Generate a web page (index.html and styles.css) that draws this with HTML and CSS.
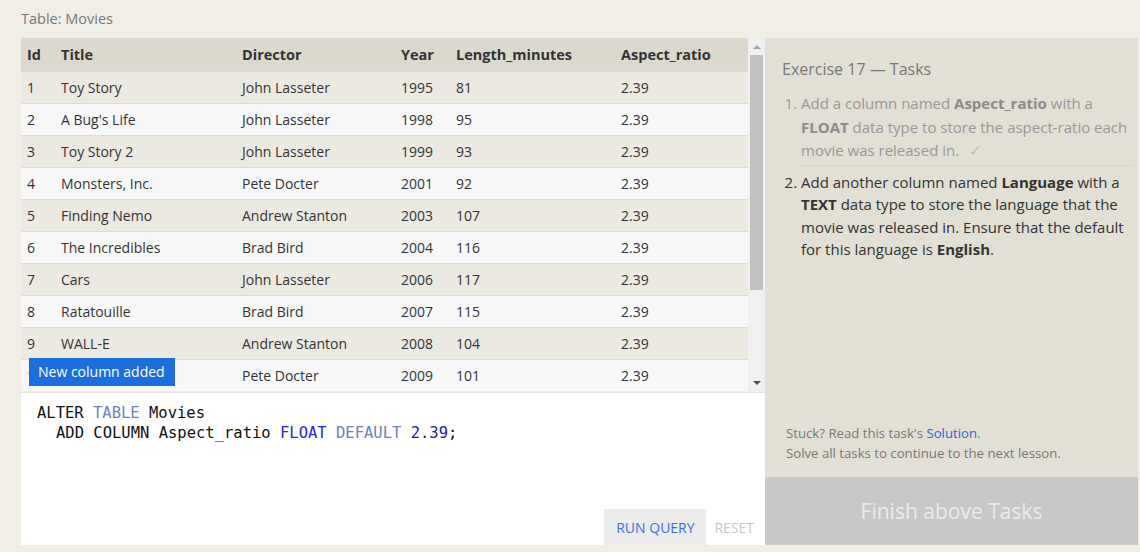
FILE: index.html
```html
<!DOCTYPE html>
<html>
<head>
<meta charset="utf-8">
<link rel="stylesheet" href="styles.css">
</head>
<body>
<div class="caption">Table: Movies</div>
<div class="main">
  <div class="left">
    <div class="table-area">
      <div class="table-scroll">
        <table class="movies">
          <thead>
            <tr><th class="c-id">Id</th><th class="c-title">Title</th><th class="c-dir">Director</th><th class="c-year">Year</th><th class="c-len">Length_minutes</th><th class="c-ar">Aspect_ratio</th></tr>
          </thead>
          <tbody>
            <tr><td>1</td><td>Toy Story</td><td>John Lasseter</td><td>1995</td><td>81</td><td>2.39</td></tr>
            <tr><td>2</td><td>A Bug's Life</td><td>John Lasseter</td><td>1998</td><td>95</td><td>2.39</td></tr>
            <tr><td>3</td><td>Toy Story 2</td><td>John Lasseter</td><td>1999</td><td>93</td><td>2.39</td></tr>
            <tr><td>4</td><td>Monsters, Inc.</td><td>Pete Docter</td><td>2001</td><td>92</td><td>2.39</td></tr>
            <tr><td>5</td><td>Finding Nemo</td><td>Andrew Stanton</td><td>2003</td><td>107</td><td>2.39</td></tr>
            <tr><td>6</td><td>The Incredibles</td><td>Brad Bird</td><td>2004</td><td>116</td><td>2.39</td></tr>
            <tr><td>7</td><td>Cars</td><td>John Lasseter</td><td>2006</td><td>117</td><td>2.39</td></tr>
            <tr><td>8</td><td>Ratatouille</td><td>Brad Bird</td><td>2007</td><td>115</td><td>2.39</td></tr>
            <tr><td>9</td><td>WALL-E</td><td>Andrew Stanton</td><td>2008</td><td>104</td><td>2.39</td></tr>
            <tr><td>10</td><td>Up</td><td>Pete Docter</td><td>2009</td><td>101</td><td>2.39</td></tr>
          </tbody>
        </table>
        <div class="badge">New column added</div>
      </div>
      <div class="scrollbar">
        <div class="arrow up"></div>
        <div class="thumb"></div>
        <div class="arrow down"></div>
      </div>
    </div>
    <div class="editor">
      <div class="code">
        <div class="line"><span>ALTER</span> <span class="kw2">TABLE</span> <span>Movies</span></div>
        <div class="line indent"><span>ADD COLUMN Aspect_ratio</span> <span class="ty">FLOAT</span> <span class="kw2">DEFAULT</span> <span class="num">2.39</span><span>;</span></div>
      </div>
      <div class="actions">
        <span class="run">RUN QUERY</span>
        <span class="reset">RESET</span>
      </div>
    </div>
  </div>
  <div class="right">
    <div class="tasks">
      <div class="tasks-title">Exercise 17 — Tasks</div>
      <ol class="task-list">
        <li class="done">Add a column named <b>Aspect_ratio</b> with a <b>FLOAT</b> data type to store the aspect-ratio each movie was released in. <span class="check">✓</span></li>
        <li class="todo">Add another column named <b>Language</b> with a <b>TEXT</b> data type to store the language that the movie was released in. Ensure that the default for this language is <b>English</b>.</li>
      </ol>
    </div>
    <div class="hint">
      <div>Stuck? Read this task's <span class="link">Solution</span>.</div>
      <div>Solve all tasks to continue to the next lesson.</div>
    </div>
    <div class="finish">Finish above Tasks</div>
  </div>
</div>
</body>
</html>
```

FILE: styles.css
```css
html, body {
  margin: 0;
  padding: 0;
}
body {
  background: #f0eee7;
  font-family: "Open Sans", "Noto Sans", sans-serif;
  color: #333;
  width: 1140px;
  height: 552px;
  overflow: hidden;
}
.caption {
  height: 38px;
  line-height: 37px;
  padding-left: 21px;
  font-size: 14.5px;
  color: #777;
}
.main {
  display: flex;
  margin-left: 21px;
  width: 1117px;
  height: 507px;
}
.left {
  width: 744px;
  display: flex;
  flex-direction: column;
}
.table-area {
  display: flex;
  height: 354px;
  flex: none;
}
.table-scroll {
  position: relative;
  width: 727px;
  overflow: hidden;
}
.movies {
  width: 100%;
  border-collapse: collapse;
  font-size: 14px;
}
.movies th {
  background: #dbd9ce;
  height: 33px;
  padding: 0;
  text-align: left;
  font-weight: 700;
  font-size: 14.5px;
  line-height: 20px;
  vertical-align: middle;
  color: #333;
}
.movies td {
  height: 31px;
  padding: 0;
  border-top: 1px solid #dcdcd6;
  color: #333;
}
.movies tbody tr:nth-child(odd) td {
  background: #ebe9e1;
}
.movies tbody tr:nth-child(even) td {
  background: #f8f8f8;
}
.movies th:first-child, .movies td:first-child {
  padding-left: 6px;
}
.c-id { width: 34px; }
.c-title { width: 181px; }
.c-dir { width: 159px; }
.c-year { width: 55px; }
.c-len { width: 165px; }
.badge {
  position: absolute;
  left: 8px;
  top: 320px;
  width: 146px;
  height: 28px;
  line-height: 27px;
  box-sizing: border-box;
  padding-left: 9px;
  background: #1b6fdc;
  color: #fff;
  font-size: 14px;
}
.scrollbar {
  width: 17px;
  background: #f0f0f0;
  display: flex;
  flex-direction: column;
  align-items: center;
}
.arrow {
  width: 0;
  height: 0;
  border-left: 4px solid transparent;
  border-right: 4px solid transparent;
}
.arrow.up {
  margin-top: 7px;
  border-bottom: 4px solid #a3a3a3;
}
.thumb {
  margin-top: 6px;
  width: 13px;
  height: 235px;
  background: #c1c1c1;
}
.arrow.down {
  margin-top: auto;
  margin-bottom: 7px;
  border-top: 4px solid #505050;
}
.editor {
  flex: 1;
  min-height: 0;
  background: #fff;
  display: flex;
  flex-direction: column;
  border-top: 1px solid #e4e4df;
}
.code {
  padding: 10px 0 0 16px;
  font-family: "DejaVu Sans Mono", "Liberation Mono", monospace;
  font-size: 15.5px;
  line-height: 20px;
  color: #111;
  flex: 1;
}
.line {
  white-space: pre;
  height: 20px;
}
.line.indent {
  padding-left: 19px;
}
.kw2 { color: #6c83b8; }
.ty { color: #2525e0; }
.num { color: #1d1dab; }
.actions {
  display: flex;
  justify-content: flex-end;
  align-items: stretch;
  height: 36px;
  padding-right: 11px;
}
.run {
  background: #ececec;
  color: #3b6ee6;
  font-size: 14px;
  width: 102px;
  display: flex;
  align-items: center;
  justify-content: center;
}
.reset {
  color: #c8c8c8;
  font-size: 14px;
  display: flex;
  align-items: center;
  padding-left: 8px;
}
.right {
  width: 373px;
  background: #e2dfd4;
  display: flex;
  flex-direction: column;
}
.tasks {
  flex: 1;
  padding: 20px 6px 0 17px;
}
.tasks-title {
  font-size: 16px;
  color: #777;
  line-height: 22px;
}
.task-list {
  margin: 12px 0 0 0;
  padding-left: 19px;
  font-size: 15px;
  line-height: 23.5px;
}
.task-list li.done {
  color: #999;
  padding-bottom: 2px;
  border-bottom: 1px solid #d6d3c8;
  margin-bottom: 5px;
}
.task-list li.done b {
  color: #8b8b8b;
}
.task-list li.todo {
  color: #333;
  line-height: 22.5px;
}
.check {
  color: #9fd0a0;
  margin-left: 6px;
}
.hint {
  padding: 0 0 14px 21px;
  font-size: 13.2px;
  line-height: 20px;
  color: #777;
}
.link {
  color: #2d63d8;
}
.finish {
  height: 68px;
  background: #c8c8c8;
  color: #ececec;
  font-size: 21px;
  display: flex;
  align-items: center;
  justify-content: center;
}
```
